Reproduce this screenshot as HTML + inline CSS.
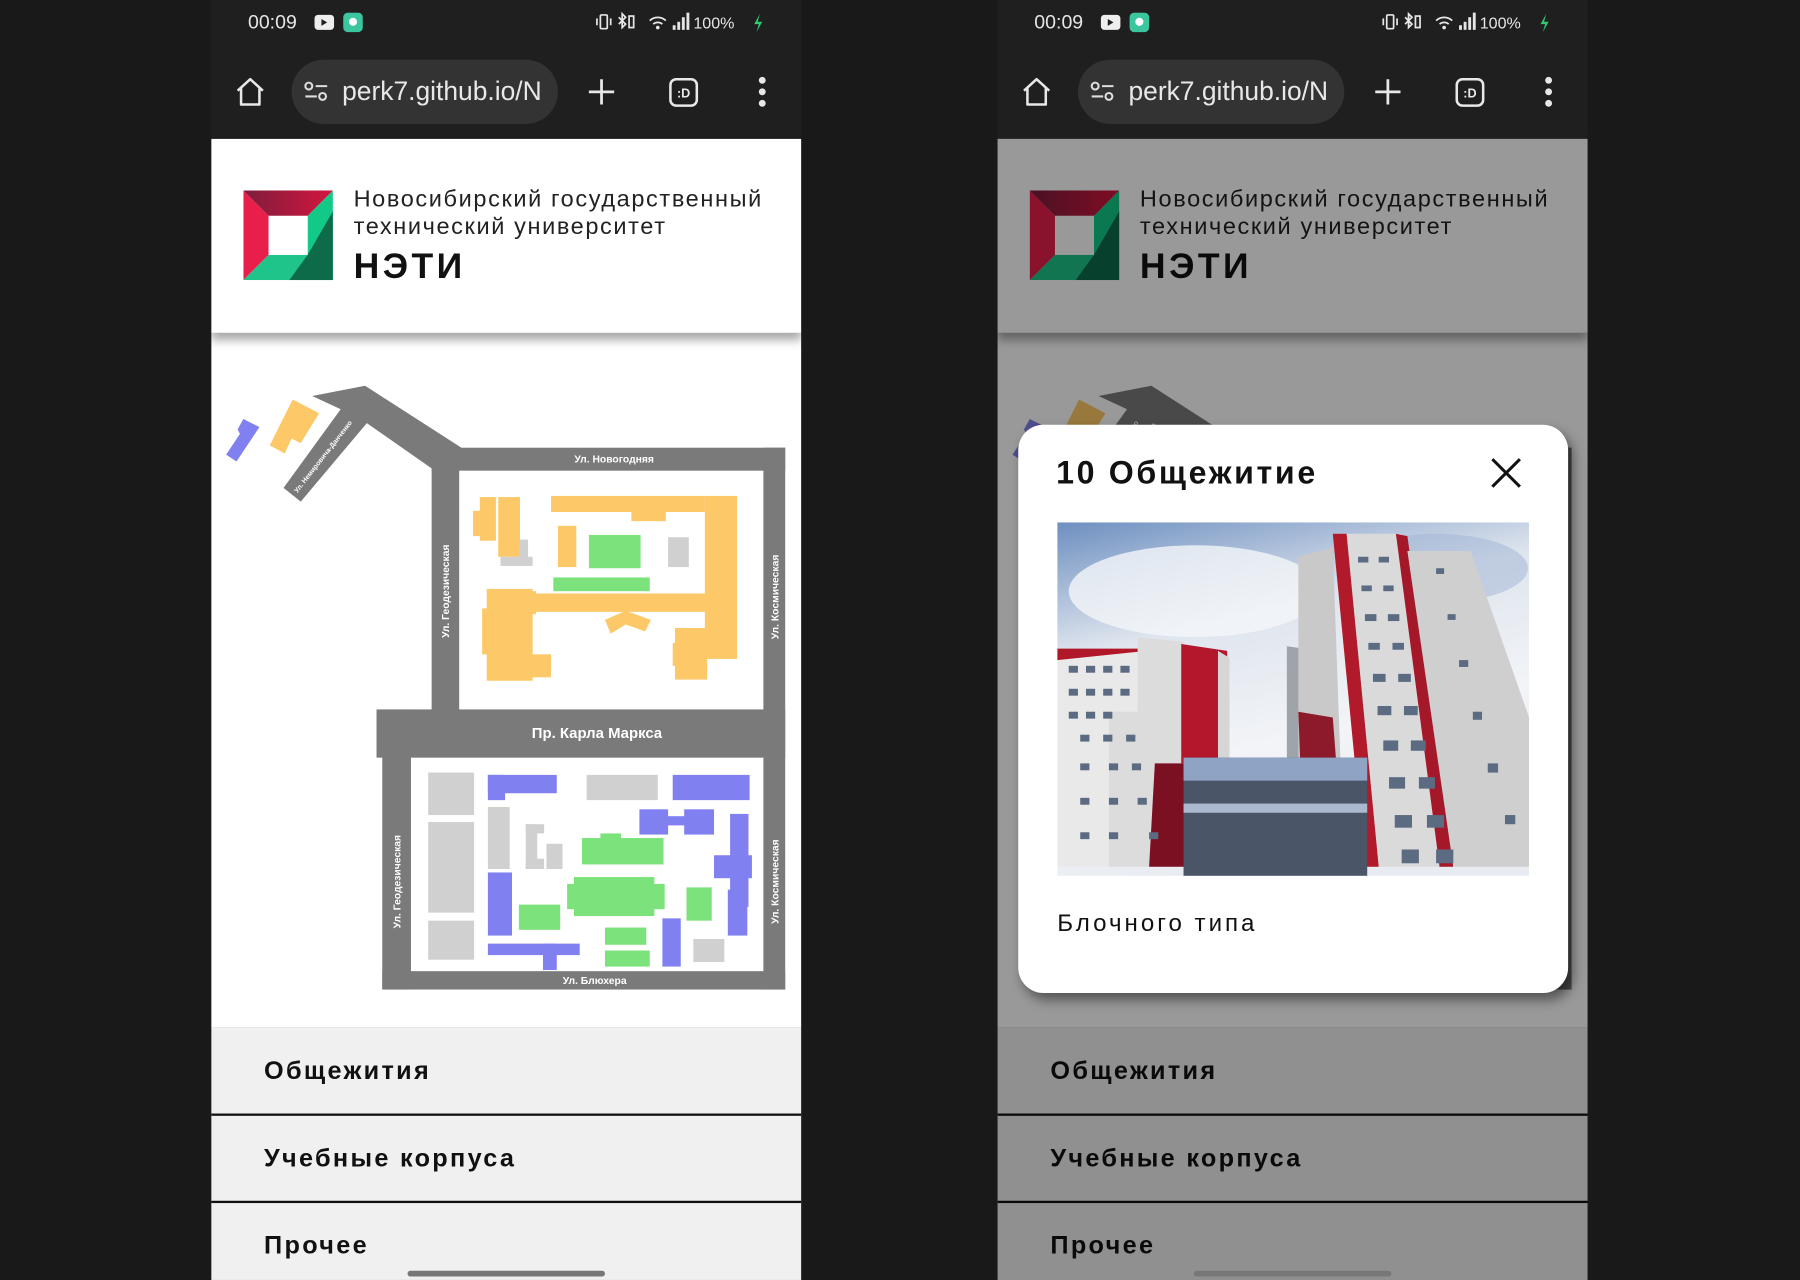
<!DOCTYPE html>
<html><head><meta charset="utf-8">
<style>
*{margin:0;padding:0;box-sizing:border-box}
html,body{width:1800px;height:1280px;overflow:hidden;background:#191919}
#w{position:absolute;left:0;top:0;width:1568px;height:1115px;transform:scale(1.14796);transform-origin:0 0;font-family:"Liberation Sans","DejaVu Sans",sans-serif}
.ph{position:absolute;top:0;width:514px;height:1115px;background:#1f1f1f;overflow:hidden}
.abs{position:absolute}
.st{color:#e6e6e6;font-size:17px;top:10px;left:32px}
.url{left:70px;top:52px;width:232px;height:56px;border-radius:28px;background:#333}
.url span{position:absolute;left:44px;top:14px;color:#e8e8e8;font-size:23px}
.hdr{left:0;top:121px;width:514px;height:169px;background:#fff;box-shadow:0 6px 8px rgba(0,0,0,.35);z-index:2}
.t1{left:124px;top:41px;font-size:20.5px;color:#222;line-height:24px;letter-spacing:1.4px;white-space:nowrap}
.t2{left:124px;top:93px;font-size:31px;font-weight:bold;color:#111;letter-spacing:3px}
.map{left:0;top:290px;width:514px;height:605px;background:#fff}
.menu{left:0;top:895px;width:514px;height:220px;background:#f0f0f0}
.mi{position:absolute;left:46px;font-size:22px;font-weight:bold;color:#111;letter-spacing:2px}
.sep{position:absolute;left:0;width:514px;height:2px;background:#111}
.hi{left:171px;top:1107px;width:172px;height:5px;border-radius:3px;background:#777;z-index:5}
.ov{left:0;top:121px;width:514px;height:994px;background:rgba(0,0,0,.4);z-index:3}
</style></head><body><div id="w">

<!-- LEFT PHONE -->
<div class="ph" style="left:184px">
 <div class="abs st">00:09</div>
 <svg class="abs" style="left:88px;top:11px" width="48" height="18"><rect x="2" y="2" width="17" height="13" rx="3" fill="#eee"/><path d="M8 5.5l5 3-5 3z" fill="#1f1f1f"/><rect x="27" y="0" width="17" height="17" rx="4" fill="#3cc6a0"/><circle cx="35.5" cy="8" r="3.5" fill="#fff"/></svg>
 <svg class="abs" style="left:334px;top:10px" width="150" height="20"><g fill="none" stroke="#e6e6e6" stroke-width="1.5"><rect x="5" y="3" width="6" height="12" rx="1"/><path d="M2 6v6M14 6v6"/><path d="M21 5l6 6-3 3V2l3 3-6 6" /><rect x="30" y="4" width="4" height="10"/><path d="M48 8a10 10 0 0 1 14 0M51 11a6 6 0 0 1 8 0"/></g><circle cx="55" cy="14" r="1.6" fill="#e6e6e6"/><g fill="#e6e6e6"><rect x="68" y="12" width="2.5" height="4"/><rect x="72" y="9" width="2.5" height="7"/><rect x="76" y="5" width="2.5" height="11"/><rect x="80" y="1" width="2.5" height="15"/></g><text x="86" y="15" fill="#e6e6e6" font-size="14" font-family="Liberation Sans">100%</text><path d="M144 2l-5 9h4l-2 7 5-9h-4z" fill="#2ecc71"/></svg>
 <svg class="abs" style="left:20px;top:66px" width="28" height="28"><path d="M3 13L14 3l11 10M6 11v14h16V11" fill="none" stroke="#e8e8e8" stroke-width="2.2" stroke-linejoin="round"/></svg>
 <div class="abs url"><svg class="abs" style="left:10px;top:18px" width="24" height="20"><g fill="none" stroke="#ddd" stroke-width="1.8"><circle cx="5" cy="5" r="3"/><path d="M11 5h10M2 14h10"/><circle cx="17" cy="14" r="3"/></g></svg><span>perk7.github.io/N</span></div>
 <svg class="abs" style="left:327px;top:67px" width="26" height="26"><path d="M13 2v22M2 13h22" stroke="#e8e8e8" stroke-width="2.4"/></svg>
 <svg class="abs" style="left:398px;top:67px" width="28" height="28"><rect x="2" y="2" width="23" height="23" rx="5" fill="none" stroke="#e8e8e8" stroke-width="2.2"/><text x="13.5" y="18" text-anchor="middle" fill="#e8e8e8" font-size="11" font-weight="bold" font-family="Liberation Sans">:D</text></svg>
 <svg class="abs" style="left:474px;top:66px" width="12" height="28"><circle cx="6" cy="4" r="3" fill="#e8e8e8"/><circle cx="6" cy="14" r="3" fill="#e8e8e8"/><circle cx="6" cy="24" r="3" fill="#e8e8e8"/></svg>
 <div class="abs hdr">
  <svg class="abs" style="left:28px;top:45px" width="78" height="78" viewBox="0 0 78 78"><defs><linearGradient id="tg" x1="0" y1="0" x2="1" y2="0"><stop offset="0" stop-color="#7d1d3c"/><stop offset="1" stop-color="#d4163f"/></linearGradient></defs><polygon points="0,0 78,0 56,22 22,22" fill="url(#tg)"/><polygon points="0,0 22,22 22,56 0,78" fill="#e81f4a"/><polygon points="78,0 56,22 56,56 78,78" fill="#12c988"/><polygon points="0,78 22,56 56,56 78,78" fill="#1ec489"/><polygon points="56,56 78,18 78,78 40,78" fill="#0d6b4a"/><rect x="22" y="22" width="34" height="34" fill="#fff"/></svg>
  <div class="abs t1">Новосибирский государственный<br>технический университет</div>
  <div class="abs t2">НЭТИ</div>
 </div>
 <div class="abs map"><svg width="514" height="605" viewBox="184 290 514 605">
  <g fill="#7a7a7a">
   <polygon points="272,345 318,336 402,390 400,410 376,408 313,364"/>
   <polygon points="300,352 320,368 262,437 247,425"/>
   <rect x="376" y="390" width="308" height="20"/><rect x="376" y="390" width="24" height="240"/><rect x="665" y="390" width="19" height="472"/>
   <rect x="328" y="618" width="356" height="42"/><rect x="333" y="618" width="25" height="244"/><rect x="333" y="846" width="351" height="16"/>
  </g>
  <g fill="#fff" font-family="Liberation Sans" font-weight="bold">
   <text x="535" y="403" font-size="9" text-anchor="middle">Ул. Новогодняя</text>
   <text x="520" y="643" font-size="13" text-anchor="middle">Пр. Карла Маркса</text>
   <text x="518" y="857" font-size="9" text-anchor="middle">Ул. Блюхера</text>
   <text transform="translate(391,515) rotate(-90)" font-size="9" text-anchor="middle">Ул. Геодезическая</text>
   <text transform="translate(678,520) rotate(-90)" font-size="9" text-anchor="middle">Ул. Космическая</text>
   <text transform="translate(349,768) rotate(-90)" font-size="9" text-anchor="middle">Ул. Геодезическая</text>
   <text transform="translate(678,768) rotate(-90)" font-size="9" text-anchor="middle">Ул. Космическая</text>
   <text transform="translate(283,399) rotate(-52)" font-size="6" text-anchor="middle">Ул. Немировича-Данченко</text>
  </g>
  <polygon points="212,365 226,372 206,402 197,396 209,378 207,374" fill="#8080f0"/>
  <polygon points="255,348 278,360 262,386 254,382 248,395 235,388" fill="#fdc867"/>
  <g fill="#fdc867">
   <rect x="418" y="433" width="14" height="38"/><rect x="412" y="445" width="8" height="22"/><rect x="434" y="433" width="19" height="52"/>
   <rect x="480" y="432" width="134" height="14"/><rect x="550" y="446" width="30" height="8"/><rect x="614" y="432" width="28" height="142"/>
   <rect x="486" y="458" width="16" height="36"/>
   <rect x="462" y="517" width="160" height="16"/>
   <rect x="424" y="513" width="40" height="80"/><rect x="420" y="530" width="10" height="40"/><rect x="428" y="570" width="52" height="20"/><rect x="455" y="515" width="12" height="20"/>
   <polygon points="527,540 545,532 567,540 562,550 545,544 532,552"/>
   <rect x="588" y="547" width="28" height="45"/><rect x="586" y="560" width="10" height="20"/>
  </g>
  <g fill="#7ce37c">
   <rect x="513" y="466" width="45" height="29"/><rect x="482" y="503" width="84" height="12"/>
   <rect x="507" y="730" width="71" height="23"/><rect x="523" y="726" width="18" height="6"/>
   <rect x="494" y="770" width="85" height="22"/><rect x="500" y="764" width="70" height="34"/>
   <rect x="452" y="788" width="36" height="22"/><rect x="598" y="773" width="22" height="29"/>
   <rect x="527" y="808" width="36" height="15"/><rect x="527" y="828" width="39" height="14"/>
  </g>
  <g fill="#d0d0d0">
   <rect x="452" y="470" width="8" height="22"/><rect x="436" y="485" width="28" height="8"/><rect x="582" y="468" width="18" height="26"/>
   <rect x="373" y="673" width="40" height="37"/><rect x="373" y="716" width="40" height="79"/><rect x="373" y="802" width="40" height="34"/>
   <rect x="425" y="703" width="19" height="54"/>
   <rect x="458" y="718" width="10" height="39"/><rect x="458" y="718" width="16" height="8"/><rect x="458" y="748" width="16" height="9"/><rect x="476" y="735" width="14" height="22"/>
   <rect x="511" y="675" width="62" height="22"/><rect x="604" y="818" width="27" height="20"/>
  </g>
  <g fill="#8080f0">
   <rect x="425" y="675" width="60" height="16"/><rect x="425" y="675" width="15" height="22"/>
   <rect x="586" y="675" width="67" height="22"/>
   <rect x="557" y="705" width="25" height="22"/><rect x="596" y="705" width="26" height="22"/><rect x="575" y="711" width="25" height="8"/>
   <rect x="636" y="709" width="16" height="81"/><rect x="622" y="745" width="33" height="20"/>
   <rect x="425" y="760" width="21" height="55"/>
   <rect x="634" y="775" width="17" height="40"/>
   <rect x="425" y="822" width="80" height="10"/><rect x="473" y="822" width="12" height="23"/>
   <rect x="577" y="800" width="16" height="42"/>
  </g>
 </svg></div>
 <div class="abs menu">
  <div class="mi" style="top:25px">Общежития</div>
  <div class="sep" style="top:75px"></div>
  <div class="mi" style="top:101px">Учебные корпуса</div>
  <div class="sep" style="top:151px"></div>
  <div class="mi" style="top:177px">Прочее</div>
 </div>
 <div class="abs hi"></div>
</div>

<!-- RIGHT PHONE -->
<div class="ph" style="left:869px" id="rp"></div>

<!-- MODAL -->
<div class="abs" style="left:887px;top:370px;width:479px;height:495px;background:#fff;border-radius:22px;box-shadow:4px 6px 10px rgba(0,0,0,.45);z-index:10">
 <div class="abs" style="left:33px;top:26px;font-size:28px;font-weight:bold;color:#111;letter-spacing:2.3px;white-space:nowrap">10 Общежитие</div>
 <svg class="abs" style="left:410px;top:27px" width="30" height="30"><path d="M3 3l24 24M27 3L3 27" stroke="#111" stroke-width="2.6"/></svg>
 <svg class="abs" style="left:34px;top:85px" width="411" height="308" viewBox="0 0 411 308">
  <defs><linearGradient id="sky" x1="0" y1="0" x2="0.3" y2="1"><stop offset="0" stop-color="#6d8fc0"/><stop offset=".35" stop-color="#dfe5ee"/><stop offset=".7" stop-color="#f2f4f7"/><stop offset="1" stop-color="#e8ecf2"/></linearGradient></defs>
  <rect width="411" height="308" fill="url(#sky)"/>
  <ellipse cx="120" cy="60" rx="110" ry="40" fill="#f4f6f9" opacity=".8"/>
  <ellipse cx="330" cy="40" rx="80" ry="30" fill="#9fb4d4" opacity=".5"/>
  <polygon points="0,110 74,110 74,120 0,120" fill="#b0182a"/>
  <polygon points="0,120 78,112 78,300 0,300" fill="#e9e9ea"/>
  <polygon points="70,100 110,104 110,300 45,300 45,165 70,165" fill="#dcdcdc"/>
  <polygon points="108,106 148,112 148,208 108,210" fill="#b3172c"/>
  <polygon points="85,210 140,210 135,300 80,300" fill="#7c1023"/>
  <polygon points="140,112 150,118 150,290 140,300" fill="#d6d6d6"/>
  <polygon points="200,108 215,110 215,300 200,300" fill="#9fa4ab"/>
  <polygon points="210,30 240,22 250,300 210,300" fill="#c9c9c9"/>
  <polygon points="240,10 300,10 340,300 268,300" fill="#dadada"/>
  <polygon points="240,10 252,10 280,300 268,300" fill="#b01a2b"/>
  <polygon points="295,10 305,12 345,300 333,300" fill="#a5182a"/>
  <polygon points="305,25 360,25 411,170 411,300 345,300" fill="#cfcfcf"/>
  <polygon points="210,165 240,170 250,300 215,300" fill="#8d1a2a"/>
  <rect x="110" y="205" width="160" height="103" fill="#4a5568"/>
  <rect x="110" y="205" width="160" height="20" fill="#8fa3c4"/>
  <rect x="110" y="245" width="160" height="8" fill="#aab9d0"/>
  <g fill="#5b6b82">
   <rect x="10" y="125" width="8" height="6"/><rect x="25" y="125" width="8" height="6"/><rect x="40" y="125" width="8" height="6"/><rect x="55" y="125" width="8" height="6"/>
   <rect x="10" y="145" width="8" height="6"/><rect x="25" y="145" width="8" height="6"/><rect x="40" y="145" width="8" height="6"/><rect x="55" y="145" width="8" height="6"/>
   <rect x="10" y="165" width="8" height="6"/><rect x="25" y="165" width="8" height="6"/><rect x="40" y="165" width="8" height="6"/>
   <rect x="20" y="185" width="8" height="6"/><rect x="40" y="185" width="8" height="6"/><rect x="60" y="185" width="8" height="6"/>
   <rect x="20" y="210" width="8" height="6"/><rect x="45" y="210" width="8" height="6"/><rect x="65" y="210" width="8" height="6"/>
   <rect x="20" y="240" width="8" height="6"/><rect x="45" y="240" width="8" height="6"/><rect x="70" y="240" width="8" height="6"/>
   <rect x="20" y="270" width="8" height="6"/><rect x="45" y="270" width="8" height="6"/><rect x="80" y="270" width="8" height="6"/>
  </g>
  <g fill="#5b6b82">
   <rect x="262" y="30" width="9" height="5"/><rect x="280" y="30" width="9" height="5"/><rect x="265" y="55" width="9" height="5"/><rect x="284" y="55" width="9" height="5"/>
   <rect x="268" y="80" width="10" height="6"/><rect x="288" y="80" width="10" height="6"/><rect x="271" y="105" width="10" height="6"/><rect x="292" y="105" width="10" height="6"/>
   <rect x="275" y="132" width="11" height="7"/><rect x="297" y="132" width="11" height="7"/><rect x="279" y="160" width="12" height="8"/><rect x="302" y="160" width="12" height="8"/>
   <rect x="284" y="190" width="13" height="9"/><rect x="308" y="190" width="13" height="9"/><rect x="289" y="222" width="14" height="10"/><rect x="315" y="222" width="14" height="10"/>
   <rect x="294" y="255" width="15" height="11"/><rect x="322" y="255" width="15" height="11"/><rect x="300" y="285" width="15" height="12"/><rect x="330" y="285" width="15" height="12"/>
   <rect x="330" y="40" width="7" height="5"/><rect x="340" y="80" width="7" height="5"/><rect x="350" y="120" width="8" height="6"/><rect x="362" y="165" width="8" height="7"/><rect x="375" y="210" width="9" height="8"/><rect x="390" y="255" width="9" height="8"/>
  </g>
 </svg>
 <div class="abs" style="left:34px;top:423px;font-size:21px;color:#111;letter-spacing:2.6px;white-space:nowrap">Блочного типа</div>
</div>

<script>
var l=document.querySelector('.ph');var r=document.getElementById('rp');r.innerHTML=l.innerHTML+'<div class="abs ov"></div>';
</script>
</div></body></html>
